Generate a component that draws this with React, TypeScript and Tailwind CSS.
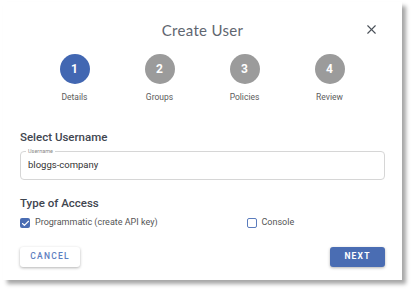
import { X, Check } from 'lucide-react';

const steps = [
  { n: 1, label: 'Details', active: true },
  { n: 2, label: 'Groups', active: false },
  { n: 3, label: 'Policies', active: false },
  { n: 4, label: 'Review', active: false },
];

function Checkbox({ checked, label }: { checked: boolean; label: string }) {
  return (
    <label className="flex items-center gap-[5px]">
      {checked ? (
        <span className="w-[10px] h-[10px] rounded-[2px] bg-[#4a6db3] flex items-center justify-center">
          <Check className="w-[9px] h-[9px] text-white" strokeWidth={3} />
        </span>
      ) : (
        <span className="w-[10px] h-[10px] rounded-[2px] border-[1.5px] border-[#5b7cbd] bg-white" />
      )}
      <span className="text-[9px] text-[#555]">{label}</span>
    </label>
  );
}

export default function App() {
  return (
    <div className="w-[412px] h-[289px] bg-white pl-[3px] pt-[2px] font-['Roboto',sans-serif]">
      <div className="w-[399px] h-[278px] bg-white shadow-[4px_4px_4px_rgba(0,0,0,0.35)] px-[17px] flex flex-col">
        {/* header */}
        <div className="relative h-[52px] flex items-center justify-center pt-[4px]">
          <h1 className="text-[15px] text-[#5f6670] font-['Lato',sans-serif] tracking-[0.3px]">Create User</h1>
          <X className="absolute right-[6px] top-[20px] w-[15px] h-[15px] text-[#4b5159]" strokeWidth={1.8} />
        </div>

        {/* stepper */}
        <div className="grid grid-cols-4 w-[340px] ml-[12px]">
          {steps.map((s) => (
            <div key={s.n} className="flex flex-col items-center">
              <div
                className={
                  s.active
                    ? 'w-[30px] h-[30px] rounded-full bg-[#4267b2] text-white flex items-center justify-center text-[12px] font-bold'
                    : 'w-[30px] h-[30px] rounded-full bg-[#9b9b9b] text-white flex items-center justify-center text-[12px] font-bold'
                }
              >
                {s.n}
              </div>
              <span className="mt-[7px] text-[8.5px] text-[#5c5c5c]">{s.label}</span>
            </div>
          ))}
        </div>

        {/* username */}
        <h2 className="mt-[25px] text-[11.5px] font-medium text-[#3f4650]">Select Username</h2>
        <div className="relative mt-[5px] h-[29px] border border-[#d6d6d6] rounded-[4px] flex items-center px-[7px]">
          <span className="absolute -top-[5px] left-[5px] bg-white px-[2px] text-[5.5px] leading-[8px] text-[#8a8a8a]">Username</span>
          <span className="text-[9.5px] text-[#333]">bloggs-company</span>
        </div>

        {/* access */}
        <h2 className="mt-[15px] text-[11.5px] font-medium text-[#3f4650]">Type of Access</h2>
        <div className="mt-[4px] grid grid-cols-2">
          <Checkbox checked label="Programmatic (create API key)" />
          <div className="pl-[44px]">
            <Checkbox checked={false} label="Console" />
          </div>
        </div>

        {/* actions */}
        <div className="mt-[17px] flex justify-between">
          <button className="w-[60px] h-[20px] bg-white rounded-[3px] shadow-[0_1px_3px_rgba(0,0,0,0.3)] text-[8.5px] tracking-[1.2px] text-[#5c7ec0] font-medium">
            CANCEL
          </button>
          <button className="w-[55px] h-[20px] bg-[#4a6db3] rounded-[3px] shadow-[0_1px_3px_rgba(0,0,0,0.3)] text-[8.5px] tracking-[1.2px] text-white font-bold">
            NEXT
          </button>
        </div>
      </div>
    </div>
  );
}
